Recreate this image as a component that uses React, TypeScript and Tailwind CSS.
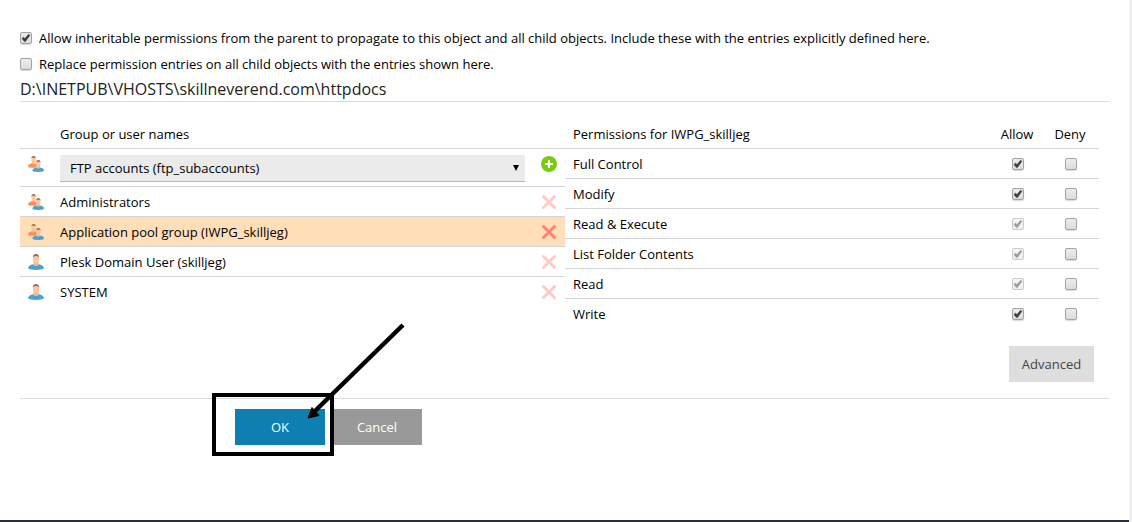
import { useState } from "react";

type CheckProps = {
  id?: string;
  label?: string;
  initial?: boolean;
  disabled?: boolean;
};

function Check({ id, label, initial = false, disabled = false }: CheckProps) {
  const [checked, setChecked] = useState(initial);
  return (
    <span className="relative block size-3 shrink-0">
      <input
        id={id}
        type="checkbox"
        aria-label={label}
        checked={checked}
        disabled={disabled}
        onChange={(e) => setChecked(e.target.checked)}
        className="block size-3 appearance-none rounded-xs border border-[#a3a3a3] bg-linear-to-b from-[#ececec] to-[#dcdcdc] shadow-[0_1px_1px_rgba(0,0,0,0.15)] disabled:border-[#cbcbcb] disabled:from-[#f6f6f6] disabled:to-[#eeeeee] disabled:shadow-none"
      />
      {checked && (
        <svg
          viewBox="0 0 12 12"
          className={
            disabled
              ? "pointer-events-none absolute inset-0 size-3 text-[#9c9c9c]"
              : "pointer-events-none absolute inset-0 size-3 text-[#3c3c3c]"
          }
          aria-hidden="true"
        >
          <path d="M2 6.4 L3.4 5.2 L5 6.6 L8.6 2.2 L10 3.2 L5.4 9.6 L4.4 9.6 Z" fill="currentColor" stroke="currentColor" strokeWidth="0.5" />
        </svg>
      )}
    </span>
  );
}

function UserIcon() {
  return (
    <svg viewBox="0 0 16 16" className="block size-4" aria-hidden="true">
      <path d="M0 14.600C0 11.800 2 10.900 5.400 10.200h5.200C14 10.900 16 11.800 16 14.600Q14 16 8 16T0 14.600Z" fill="#4aa3cf" />
      <path d="M5.500 8h5v3.200Q8 13 5.500 11.200z" fill="#f3b48a" />
      <path d="M5 3Q5 1 8 1t3 2v3.500Q10.800 9.600 8 9.600T5 6.500Z" fill="#fdc6a0" />
      <path d="M4.900 4V2.500Q5.200 0 8 0t3.100 2.500V4L10.500 2.400Q8 1.800 5.500 2.400Z" fill="#95694d" />
    </svg>
  );
}

function GroupIcon() {
  return (
    <svg viewBox="0 0 16 16" className="block size-4" aria-hidden="true">
      <path d="M0 11C0 8.600 1.500 8 4 7.300H7.500L9 9 8 11.500Q2 12.300 0 11Z" fill="#ff8c50" />
      <path d="M4 5h3.200v3Q5.600 9 4 8z" fill="#f3b48a" />
      <path d="M3.500 2Q3.800.6 5.600.6T7.700 2v2.700Q7.400 7 5.600 7T3.500 4.700Z" fill="#fdc6a0" />
      <path d="M3.400 3V1.800Q3.700 0 5.600 0t2.200 1.800V3L7.400 1.700H3.800Z" fill="#95694d" />
      <path d="M4.400 15C4.400 12.800 6 12 8.500 11.500h3.600C14.600 12 16 12.800 16 15q-1.500 1-5.800 1T4.400 15Z" fill="#4aa3cf" />
      <path d="M8.600 9.500H12V12Q10.300 13.400 8.600 12z" fill="#f3b48a" />
      <path d="M8.200 6Q8.400 4.600 10.300 4.600T12.400 6v2.700Q12.100 11 10.300 11T8.200 8.700Z" fill="#fdc6a0" />
      <path d="M8.100 7V5.800Q8.400 4 10.300 4t2.200 1.800V7l-.4-1.300H8.500Z" fill="#95694d" />
    </svg>
  );
}

function RemoveIcon({ active }: { active: boolean }) {
  return (
    <svg viewBox="0 0 16 16" className={active ? "block size-4 text-[#fe8176]" : "block size-4 text-[#ffc9c5]"} aria-hidden="true">
      <path d="M2.500 2.500l11 11M13.500 2.500l-11 11" stroke="currentColor" strokeWidth="3" strokeLinecap="round" />
    </svg>
  );
}

function AddIcon() {
  return (
    <svg viewBox="0 0 16 16" className="block size-4" aria-hidden="true">
      <circle cx="8" cy="8" r="8" fill="#7ccb10" />
      <path d="M8 4v8M4 8h8" stroke="#fff" strokeWidth="2" />
    </svg>
  );
}

const users = [
  { name: "Administrators", group: true },
  { name: "Application pool group (IWPG_skilljeg)", group: true },
  { name: "Plesk Domain User (skilljeg)", group: false },
  { name: "SYSTEM", group: false },
];

const permissions = [
  { name: "Full Control", allow: true, locked: false },
  { name: "Modify", allow: true, locked: false },
  { name: "Read & Execute", allow: true, locked: true },
  { name: "List Folder Contents", allow: true, locked: true },
  { name: "Read", allow: true, locked: true },
  { name: "Write", allow: true, locked: false },
];

function UsersTable() {
  const selected = 1;
  return (
    <table className="w-full table-fixed border-collapse text-left">
      <colgroup>
        <col className="w-10" />
        <col />
        <col className="w-10" />
      </colgroup>
      <thead>
        <tr className="h-[30px] border-b border-[#d5d5d5]">
          <th />
          <th className="pt-0.5 font-normal">Group or user names</th>
          <th />
        </tr>
      </thead>
      <tbody>
        <tr className="h-[38px] border-b border-[#d5d5d5]">
          <td className="pt-[7px] pl-2 align-top">
            <GroupIcon />
          </td>
          <td className="pt-1.5 align-top">
            <div className="relative">
              <select
                aria-label="Group or user"
                className="block h-[27px] w-full appearance-none rounded-none border-b border-[#b5b8bb] bg-[#ebebeb] pr-6 pl-2.5"
              >
                <option>FTP accounts (ftp_subaccounts)</option>
              </select>
              <svg viewBox="0 0 6 6" className="pointer-events-none absolute top-2.5 right-1.5 size-1.5" aria-hidden="true">
                <path d="M0 0h6L3 6z" fill="#000" />
              </svg>
            </div>
          </td>
          <td className="pt-[7px] pl-4 align-top">
            <button type="button" aria-label="Add" className="block">
              <AddIcon />
            </button>
          </td>
        </tr>
        {users.map((user, i) => (
          <tr
            key={user.name}
            className={
              i === selected
                ? "h-[30px] border-b border-[#d5d5d5] bg-[#ffdeb8]"
                : "h-[30px] border-b border-[#d5d5d5] last:border-b-0"
            }
          >
            <td className="pt-0.5 pl-2">{user.group ? <GroupIcon /> : <UserIcon />}</td>
            <td className="pt-0.5">{user.name}</td>
            <td className="pt-0.5 pl-4">
              <button type="button" aria-label={`Remove ${user.name}`} className="block">
                <RemoveIcon active={i === selected} />
              </button>
            </td>
          </tr>
        ))}
      </tbody>
    </table>
  );
}

function PermissionsTable() {
  return (
    <table className="w-full table-fixed border-collapse text-left">
      <colgroup>
        <col />
        <col className="w-[50px]" />
        <col className="w-14" />
      </colgroup>
      <thead>
        <tr className="h-[30px] border-b border-[#d5d5d5]">
          <th className="pt-0.5 pl-2 font-normal">Permissions for IWPG_skilljeg</th>
          <th className="pt-0.5 pr-0.5 text-center font-normal">Allow</th>
          <th className="pt-0.5 pr-0.5 text-center font-normal">Deny</th>
        </tr>
      </thead>
      <tbody>
        {permissions.map((p) => (
          <tr key={p.name} className="h-[30px] border-b border-[#d5d5d5] last:border-b-0">
            <td className="pt-0.5 pl-2">{p.name}</td>
            <td className="pt-0.5">
              <div className="flex justify-center">
                <Check label={`Allow ${p.name}`} initial={p.allow} disabled={p.locked} />
              </div>
            </td>
            <td className="pt-0.5">
              <div className="flex justify-center">
                <Check label={`Deny ${p.name}`} />
              </div>
            </td>
          </tr>
        ))}
      </tbody>
    </table>
  );
}

export default function App() {
  return (
    <div className="flex min-h-screen bg-white font-['Open_Sans','Noto_Sans',sans-serif] text-[13px] leading-5 text-black">
      <div className="flex min-w-0 grow flex-col">
        <main className="grow px-5 pt-7">
          <div className="flex h-5 items-center gap-[7px]">
            <Check id="inherit" initial />
            <label htmlFor="inherit">
              Allow inheritable permissions from the parent to propagate to this object and all child objects. Include
              these with the entries explicitly defined here.
            </label>
          </div>
          <div className="mt-1.5 flex h-5 items-center gap-[7px]">
            <Check id="replace" />
            <label htmlFor="replace">
              Replace permission entries on all child objects with the entries shown here.
            </label>
          </div>
          <h1 className="mt-[5px] border-b border-[#dcdcdc] pb-0.5 text-base leading-5 text-[#222222]">
            D:\INETPUB\VHOSTS\skillneverend.com\httpdocs
          </h1>

          <div className="mt-4 grid grid-cols-[545fr_534fr] items-start pr-2.5">
            <UsersTable />
            <div>
              <PermissionsTable />
              <div className="mt-[18px] flex justify-end pr-[5px]">
                <button type="button" className="h-9 w-[85px] bg-[#dedede] text-[#444444]">
                  Advanced
                </button>
              </div>
            </div>
          </div>

          <div className="mt-4 flex gap-[7px] border-t border-[#dcdcdc] pt-2.5 pl-[215px] text-white">
            <div className="relative">
              <button type="button" className="block h-9 w-[90px] bg-[#0f7fb1]">
                OK
              </button>
              <div className="pointer-events-none absolute -top-4 -left-[23px] z-10 h-[63px] w-[122px] border-4 border-black" />
              <svg
                viewBox="0 0 110 110"
                className="pointer-events-none absolute -top-[93px] left-[65px] z-10 size-[110px]"
                aria-hidden="true"
              >
                <path d="M103 9L15 95" stroke="#000" strokeWidth="4.5" />
                <path d="M8 102L12 91.500L19 99.500Z" fill="#000" stroke="#000" strokeWidth="1" />
              </svg>
            </div>
            <button type="button" className="h-9 w-[90px] bg-[#999999]">
              Cancel
            </button>
          </div>
        </main>
        <footer className="h-0.5 bg-[#252f3d]" />
      </div>
      <div className="w-[3px] shrink-0 bg-[#f0f0f0]" />
    </div>
  );
}
